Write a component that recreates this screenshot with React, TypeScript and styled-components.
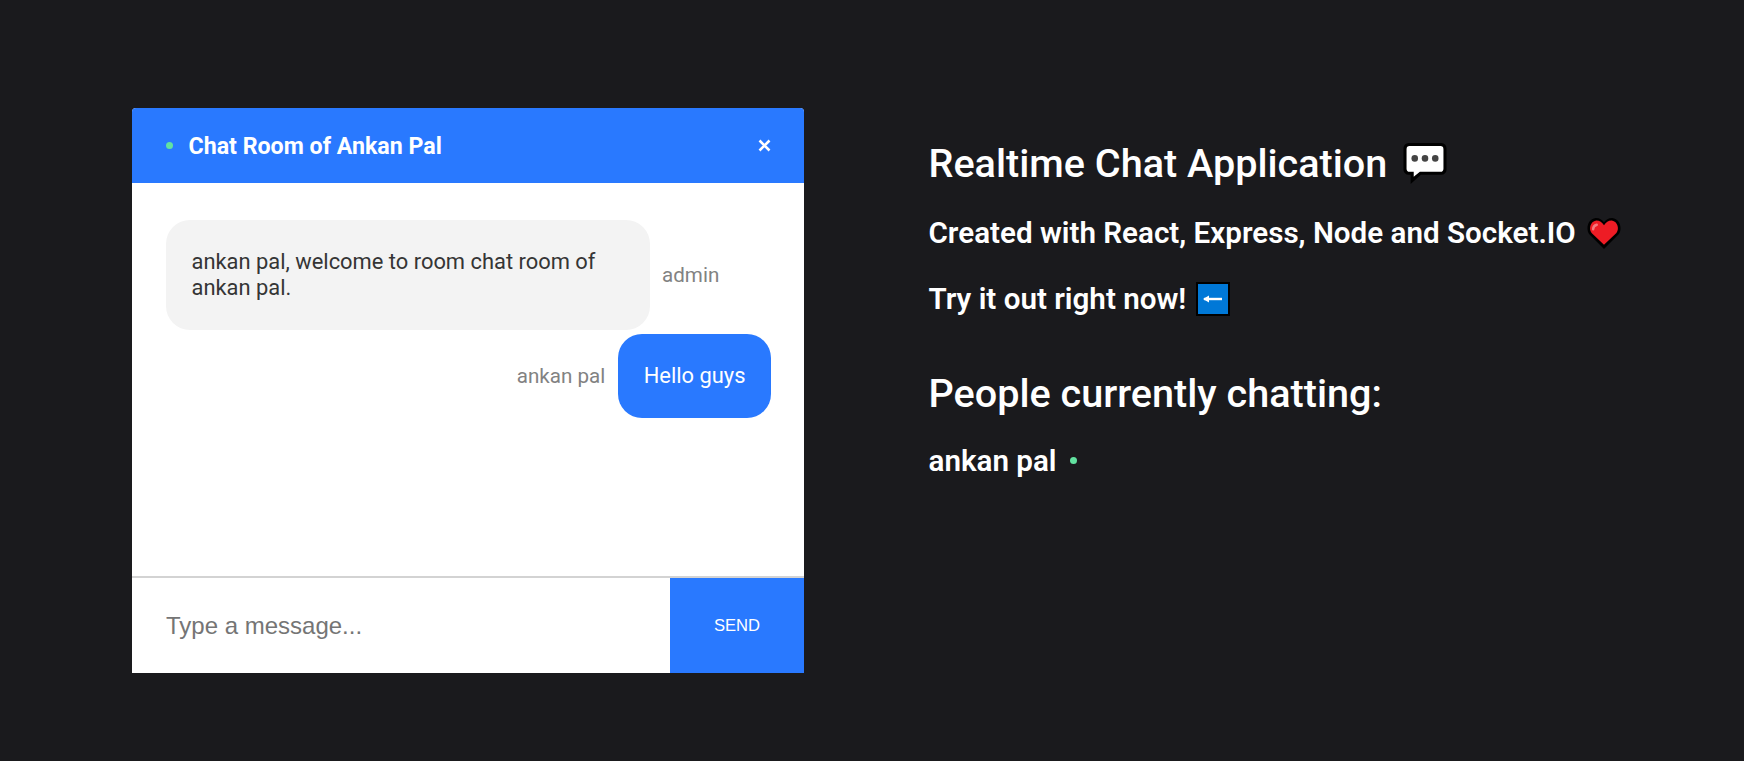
import styled, { createGlobalStyle } from 'styled-components';

const GlobalStyle = createGlobalStyle`
    html, body {
        margin: 0;
        padding: 0;
        height: 100%;
        background: #1a1a1d;
        font-family: Roboto, "Liberation Sans", sans-serif;
    }
    * {
        box-sizing: border-box;
    }
`;

const Page = styled.div`
    display: flex;
    align-items: flex-start;
    gap: 124.5px;
    height: 761px;
    padding: 108px 0 0 132px;
    background: #1a1a1d;
    overflow: hidden;
`;

const Card = styled.section`
    display: flex;
    flex-direction: column;
    width: 672px;
    height: 565px;
    background: #fff;
    border-radius: 4px 4px 0 0;
    overflow: hidden;
`;

const InfoBar = styled.header`
    display: flex;
    align-items: center;
    justify-content: space-between;
    height: 75px;
    padding: 0 33px 0 33.5px;
    background: #2979ff;
    color: #fff;
`;

const RoomName = styled.div`
    display: flex;
    align-items: center;
    gap: 15.5px;
`;

const OnlineDot = styled.span`
    display: inline-block;
    width: 7.5px;
    height: 7.5px;
    border-radius: 50%;
    background: #62e2a0;
`;

const RoomTitle = styled.h3`
    margin: 0;
    font-size: 23.2px;
    font-weight: 700;
`;

const Messages = styled.div`
    flex: 1;
    padding: 37px 33px 0 34px;
`;

const MessageRow = styled.div<{ $mine?: boolean }>`
    display: flex;
    align-items: center;
    justify-content: ${(p) => (p.$mine ? 'flex-end' : 'flex-start')};
    margin-bottom: 4px;
`;

const Bubble = styled.div<{ $mine?: boolean }>`
    width: ${(p) => (p.$mine ? 'auto' : '484px')};
    padding: 28.5px 25.5px;
    border-radius: 24px;
    background: ${(p) => (p.$mine ? '#2979ff' : '#f3f3f3')};
    color: ${(p) => (p.$mine ? '#fff' : '#353535')};
    font-size: 21.9px;
    line-height: 26.6px;
`;

const Sender = styled.span<{ $mine?: boolean }>`
    margin: ${(p) => (p.$mine ? '0 13px 0 0' : '0 0 0 12px')};
    color: #828282;
    font-size: 20.6px;
`;

const Composer = styled.form`
    display: flex;
    height: 97px;
    border-top: 2px solid #d3d3d3;
`;

const MessageInput = styled.input`
    flex: 1;
    min-width: 0;
    padding: 0 34px;
    border: none;
    outline: none;
    font-family: "Liberation Sans", Arial, sans-serif;
    font-size: 24px;

    &::placeholder {
        color: #757575;
    }
`;

const SendButton = styled.button`
    width: 134px;
    border: none;
    background: #2979ff;
    color: #fff;
    font-family: "Liberation Sans", Arial, sans-serif;
    font-size: 16.6px;
    text-transform: uppercase;
`;

const TextColumn = styled.div`
    color: #fff;
`;

const BigHeading = styled.h1<{ $top: number }>`
    display: flex;
    align-items: center;
    gap: 16px;
    margin: ${(p) => p.$top}px 0 0;
    font-size: 39.6px;
    line-height: 47px;
    font-weight: 550;
`;

const SubHeading = styled.h2<{ $top: number; $iconGap: number }>`
    display: flex;
    align-items: center;
    gap: ${(p) => p.$iconGap}px;
    margin: ${(p) => p.$top}px 0 0;
    font-size: 29.6px;
    line-height: 36px;
    font-weight: 600;
`;

const Emoji = styled.svg`
    display: block;
    flex: none;
`;

function ChatEmoji() {
    return (
        <Emoji width="44" height="41" viewBox="2 1 42 40">
            <path d="M7 1h32a5 5 0 0 1 5 5v21a5 5 0 0 1-5 5H19l-10 9v-9H7a5 5 0 0 1-5-5V6a5 5 0 0 1 5-5z" fill="#000" />
            <path d="M8 4h30a3 3 0 0 1 3 3v19a3 3 0 0 1-3 3H18l-6 5v-5H8a3 3 0 0 1-3-3V7a3 3 0 0 1 3-3z" fill="#fff" />
            <circle cx="13" cy="16" r="3.2" fill="#444" />
            <circle cx="23" cy="16" r="3.2" fill="#444" />
            <circle cx="33" cy="16" r="3.2" fill="#444" />
        </Emoji>
    );
}

function HeartEmoji() {
    return (
        <Emoji width="34" height="31" viewBox="1 1 32 30">
            <path d="M17 31 3 17C-1 12 1 2 9 1c4 0 6 2 8 4 2-2 4-4 8-4 8 1 10 11 6 16z" fill="#000" />
            <path d="M17 27 5 15.500C2 12 3.500 4.500 9.500 3.500c3.500 0 5.500 2 7.500 4.500 2-2.500 4-4.500 7.500-4.500 6 1 7.500 8.500 4.500 12z" fill="#ee1c25" />
            <path d="M6.500 12c0-2 1.500-4 3.500-4.500" stroke="#f5797f" strokeWidth="2.400" strokeLinecap="round" fill="none" />
        </Emoji>
    );
}

function ArrowEmoji() {
    return (
        <Emoji width="34" height="34" viewBox="0 0 34 34">
            <rect width="34" height="34" fill="#000" />
            <rect x="2" y="2" width="30" height="30" fill="#0078d7" />
            <path d="M8 17h18" stroke="#fff" strokeWidth="2.400" />
            <path d="M7 17l6-3.500v7z" fill="#fff" />
        </Emoji>
    );
}

export default function App() {
    return (
        <Page>
            <GlobalStyle />
            <Card>
                <InfoBar>
                    <RoomName>
                        <OnlineDot />
                        <RoomTitle>Chat Room of Ankan Pal</RoomTitle>
                    </RoomName>
                    <svg width="13" height="13" viewBox="0 0 13 13">
                        <path d="M1.500 1.500l10 10M11.500 1.500l-10 10" stroke="#fff" strokeWidth="2.600" />
                    </svg>
                </InfoBar>
                <Messages>
                    <MessageRow>
                        <Bubble>ankan pal, welcome to room chat room of ankan pal.</Bubble>
                        <Sender>admin</Sender>
                    </MessageRow>
                    <MessageRow $mine>
                        <Sender $mine>ankan pal</Sender>
                        <Bubble $mine>Hello guys</Bubble>
                    </MessageRow>
                </Messages>
                <Composer>
                    <MessageInput type="text" placeholder="Type a message..." />
                    <SendButton type="button">Send</SendButton>
                </Composer>
            </Card>
            <TextColumn>
                <BigHeading $top={32}>
                    Realtime Chat Application <ChatEmoji />
                </BigHeading>
                <SubHeading $top={28} $iconGap={11}>
                    Created with React, Express, Node and Socket.IO <HeartEmoji />
                </SubHeading>
                <SubHeading $top={30} $iconGap={10}>
                    Try it out right now! <ArrowEmoji />
                </SubHeading>
                <BigHeading $top={52.5}>People currently chatting:</BigHeading>
                <SubHeading $top={26} $iconGap={13}>
                    ankan pal <OnlineDot />
                </SubHeading>
            </TextColumn>
        </Page>
    );
}
